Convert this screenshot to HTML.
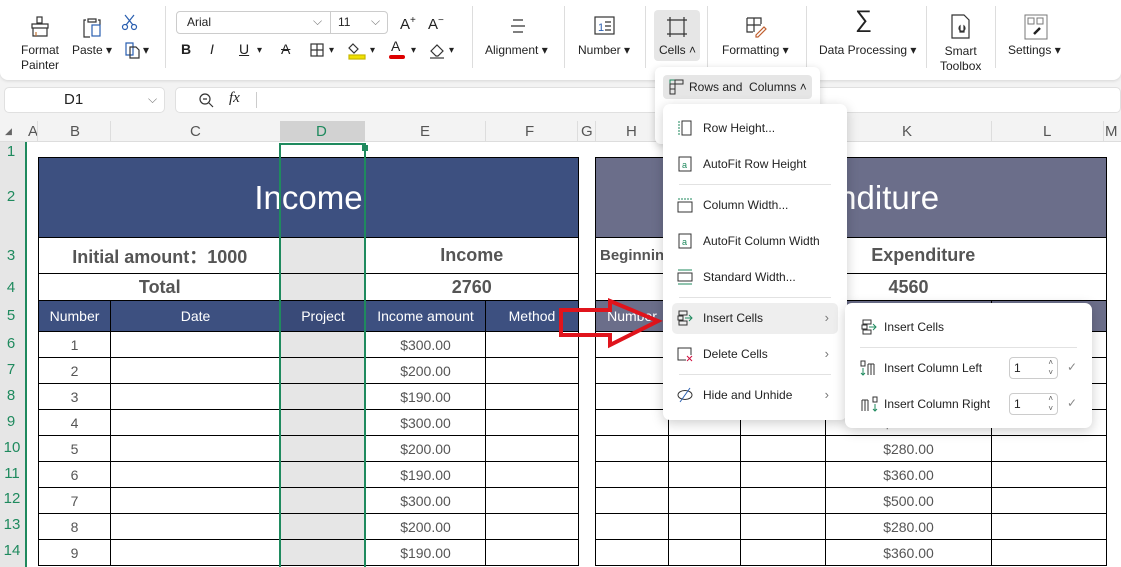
<!DOCTYPE html>
<html style="width:1121px;height:567px;overflow:hidden"><head><meta charset="utf-8"><style>
*{box-sizing:border-box;margin:0;padding:0}
body{width:1121px;height:567px;overflow:hidden;background:#f3f3f3;font-family:"Liberation Sans",Arial,sans-serif;position:relative;color:#222}
.abs{position:absolute}
.lbl{position:absolute;font-size:12px;color:#222;text-align:center;white-space:nowrap;line-height:15px}
.sep{position:absolute;top:6px;width:1px;height:62px;background:#ddd}
table{border-collapse:collapse;table-layout:fixed;position:absolute}
td{border:1px solid #000;text-align:center;font-size:14px;color:#555;white-space:nowrap;overflow:hidden;padding:0}
.hd td{background:#3d5080;color:#fff}
.hd td.d{background:#394a78}
td.d{background:#e6e6e6}
.b{font-weight:bold;font-size:18px;color:#555}
.mi{position:absolute;left:0;width:184px;height:30px;font-size:12px;color:#222;line-height:30px;padding-left:40px}
.mi svg{position:absolute;left:14px;top:7px}
.ms{position:absolute;left:16px;width:152px;height:1px;background:#e2e2e2}
.chev{position:absolute;right:18px;top:0;color:#777;font-size:13px}
#clip{position:absolute;left:0;top:0;width:1121px;height:567px;overflow:hidden}
</style></head><body><div id="clip">

<!-- ribbon -->
<div class="abs" style="left:0;top:0;width:1121px;height:80px;background:#fff;border-radius:0 0 8px 8px;box-shadow:0 1px 3px rgba(0,0,0,.12)"></div>
<svg class="abs" style="left:28px;top:15px" width="24" height="24" viewBox="0 0 24 24" fill="none" stroke="#333" stroke-width="1.2"><rect x="9" y="2" width="5" height="6"/><path d="M4 9h16v4H4zM5 13v8h14v-8"/><path d="M8 17v4" stroke="#c07030"/></svg>
<div class="lbl" style="left:14px;top:43px;width:52px">Format<br>Painter</div>
<svg class="abs" style="left:80px;top:15px" width="24" height="24" viewBox="0 0 24 24" fill="none" stroke="#333" stroke-width="1.2"><path d="M8 4h8v3H8zM6 5H4v17h6M18 5h2v5"/><rect x="12" y="10" width="8" height="11" stroke="#2a5fb0"/></svg>
<div class="lbl" style="left:72px;top:43px">Paste ▾</div>
<svg class="abs" style="left:120px;top:12px" width="20" height="20" viewBox="0 0 20 20" fill="none" stroke="#2a5fb0" stroke-width="1.2"><circle cx="5" cy="15" r="2.5"/><circle cx="14" cy="15" r="2.5"/><path d="M6 13L14 3M13 13L5 3"/></svg>
<svg class="abs" style="left:123px;top:40px" width="20" height="20" viewBox="0 0 20 20" fill="none" stroke="#333" stroke-width="1.2"><path d="M3 3h7v12H3z" stroke="#2a5fb0"/><path d="M7 7h6l3 3v8H7z"/></svg>
<div class="lbl" style="left:143px;top:43px">▾</div>
<div class="sep" style="left:165px"></div>

<div class="abs" style="left:176px;top:11px;width:212px;height:23px;border:1px solid #ccc;border-radius:4px"></div>
<div class="abs" style="left:330px;top:12px;width:1px;height:21px;background:#ccc"></div>
<div class="lbl" style="left:187px;top:15px">Arial</div>
<div class="lbl" style="left:313px;top:14px;color:#777">⌵</div>
<div class="lbl" style="left:338px;top:15px">11</div>
<div class="lbl" style="left:371px;top:14px;color:#777">⌵</div>
<div class="lbl" style="left:400px;top:13px;font-size:15px">A<sup style="font-size:10px">+</sup></div>
<div class="lbl" style="left:428px;top:13px;font-size:15px">A<sup style="font-size:10px">−</sup></div>
<div class="lbl" style="left:181px;top:42px;font-weight:bold;font-size:14px">B</div>
<div class="lbl" style="left:210px;top:42px;font-style:italic;font-size:14px">I</div>
<div class="lbl" style="left:239px;top:42px;text-decoration:underline;font-size:14px">U</div>
<div class="lbl" style="left:257px;top:43px;font-size:10px">▾</div>
<div class="lbl" style="left:281px;top:42px;text-decoration:line-through;font-size:14px">A</div>
<svg class="abs" style="left:309px;top:42px" width="16" height="16" fill="none" stroke="#333" stroke-width="1.2"><rect x="2" y="2" width="12" height="12"/><path d="M8 2v12M2 8h12"/></svg>
<div class="lbl" style="left:329px;top:43px;font-size:10px">▾</div>
<svg class="abs" style="left:348px;top:40px" width="18" height="20" fill="none" stroke="#333" stroke-width="1.2"><path d="M5 4l5 5-4 4-5-5z"/><rect x="1" y="15" width="16" height="4" fill="#f0e000" stroke="#c8b800"/></svg>
<div class="lbl" style="left:370px;top:43px;font-size:10px">▾</div>
<div class="lbl" style="left:391px;top:39px;font-size:14px">A</div>
<div class="abs" style="left:389px;top:55px;width:16px;height:4px;background:#d00;border-radius:2px"></div>
<div class="lbl" style="left:411px;top:43px;font-size:10px">▾</div>
<svg class="abs" style="left:428px;top:41px" width="18" height="18" fill="none" stroke="#333" stroke-width="1.2"><path d="M3 10l6-6 6 6-5 5H8z"/><path d="M2 17h14"/></svg>
<div class="lbl" style="left:449px;top:43px;font-size:10px">▾</div>
<div class="sep" style="left:472px"></div>

<svg class="abs" style="left:509px;top:16px" width="18" height="20" stroke="#333" stroke-width="1.2"><path d="M4 4h10M2 10h14M4 16h10"/></svg>
<div class="lbl" style="left:485px;top:43px">Alignment ▾</div>
<div class="sep" style="left:564px"></div>
<svg class="abs" style="left:594px;top:16px" width="22" height="20" fill="none" stroke="#333" stroke-width="1.2"><rect x="1" y="1" width="19" height="17"/><path d="M11 6h6M11 10h6M11 14h6"/><text x="4" y="15" font-size="11" fill="#2a5fb0" stroke="none" font-family="Liberation Sans">1</text></svg>
<div class="lbl" style="left:578px;top:43px">Number ▾</div>
<div class="sep" style="left:645px"></div>
<div class="abs" style="left:654px;top:10px;width:46px;height:51px;background:#e6e6e6;border-radius:4px"></div>
<svg class="abs" style="left:666px;top:16px" width="22" height="22" fill="none" stroke="#333" stroke-width="1.2"><path d="M4 1v20M18 1v20M1 4h20M1 18h20"/></svg>
<div class="lbl" style="left:659px;top:43px">Cells ˄</div>
<div class="sep" style="left:707px"></div>
<svg class="abs" style="left:745px;top:16px" width="24" height="22" fill="none" stroke="#333" stroke-width="1.2"><path d="M2 2h14v6M2 2v14h6M2 9h14M9 2v14"/><path d="M11 19l8-8 2 2-8 8h-2z" stroke="#c06030"/></svg>
<div class="lbl" style="left:722px;top:43px">Formatting ▾</div>
<div class="sep" style="left:806px"></div>
<div class="lbl" style="left:855px;top:12px;font-size:24px;font-weight:normal">∑</div>
<div class="lbl" style="left:819px;top:43px">Data Processing ▾</div>
<div class="sep" style="left:926px"></div>
<svg class="abs" style="left:950px;top:14px" width="22" height="26" fill="none" stroke="#333" stroke-width="1.2"><path d="M2 1h12l5 5v18H2z"/><path d="M10 12a3 3 0 1 0 4 0v6h-4z"/></svg>
<div class="lbl" style="left:940px;top:44px">Smart<br>Toolbox</div>
<div class="sep" style="left:995px"></div>
<svg class="abs" style="left:1024px;top:14px" width="24" height="26" fill="none" stroke="#777" stroke-width="1"><rect x="1" y="1" width="22" height="24"/><rect x="4" y="4" width="6" height="6"/><rect x="13" y="4" width="6" height="6"/><path d="M10 20l6-6" stroke="#222" stroke-width="2.5"/></svg>
<div class="lbl" style="left:1008px;top:43px">Settings ▾</div>

<!-- formula bar -->
<div class="abs" style="left:4px;top:87px;width:161px;height:26px;background:#fff;border-radius:5px;border:1px solid #e0e0e0"></div>
<div class="lbl" style="left:64px;top:92px;font-size:15px">D1</div>
<div class="lbl" style="left:148px;top:92px;color:#777">⌵</div>
<div class="abs" style="left:175px;top:87px;width:946px;height:26px;background:#fff;border-radius:5px;border:1px solid #e0e0e0"></div>
<svg class="abs" style="left:198px;top:92px" width="16" height="16" fill="none" stroke="#333" stroke-width="1.2"><circle cx="7" cy="7" r="5"/><path d="M5 7h4M11 11l4 4"/></svg>
<div class="lbl" style="left:229px;top:91px;font-style:italic;font-size:15px;font-family:'Liberation Serif',serif">fx</div>
<div class="abs" style="left:256px;top:92px;width:1px;height:16px;background:#ccc"></div>

<!-- sheet -->
<div class="abs" style="left:0;top:121px;width:1121px;height:446px;background:#fff"></div>
<div class="abs" style="left:0;top:121px;width:1121px;height:21px;background:#f3f3f3;border-bottom:1px solid #ddd"></div>
<div class="abs" style="left:280px;top:121px;width:85px;height:21px;background:#d2d2d2"></div>
<div class="abs" style="left:0;top:142px;width:26px;height:425px;background:#e6e6e6"></div>
<div class="abs" style="left:25px;top:142px;width:2px;height:425px;background:#1f8a5e"></div>
<div class="lbl" style="left:5px;top:124px;font-size:9px;color:#666">◢</div>
<div style="position:absolute;left:0;top:121px;font-size:15px;color:#555;line-height:21px">
<span class="abs" style="left:28px">A</span><span class="abs" style="left:70px">B</span><span class="abs" style="left:190px">C</span><span class="abs" style="left:316px;color:#1f8a5e">D</span><span class="abs" style="left:420px">E</span><span class="abs" style="left:525px">F</span><span class="abs" style="left:581px">G</span><span class="abs" style="left:626px">H</span><span class="abs" style="left:902px">K</span><span class="abs" style="left:1043px">L</span><span class="abs" style="left:1105px">M</span>
</div>
<div class="abs" style="left:37px;top:121px;width:1px;height:21px;background:#ddd"></div>
<div class="abs" style="left:110px;top:121px;width:1px;height:21px;background:#ddd"></div>
<div class="abs" style="left:485px;top:121px;width:1px;height:21px;background:#ddd"></div>
<div class="abs" style="left:577px;top:121px;width:1px;height:21px;background:#ddd"></div>
<div class="abs" style="left:595px;top:121px;width:1px;height:21px;background:#ddd"></div>
<div class="abs" style="left:991px;top:121px;width:1px;height:21px;background:#ddd"></div>
<div class="abs" style="left:1103px;top:121px;width:1px;height:21px;background:#ddd"></div>
<div style="position:absolute;left:0;width:24px;text-align:center;font-size:15px;color:#1f8a5e">
<div class="abs" style="left:0;width:22px;top:143px">1</div>
<div class="abs" style="left:0;width:22px;top:188px">2</div>
<div class="abs" style="left:0;width:22px;top:247px">3</div>
<div class="abs" style="left:0;width:22px;top:279px">4</div>
<div class="abs" style="left:0;width:22px;top:307px">5</div>
<div class="abs" style="left:0;width:22px;top:335px">6</div>
<div class="abs" style="left:0;width:22px;top:361px">7</div>
<div class="abs" style="left:0;width:22px;top:387px">8</div>
<div class="abs" style="left:0;width:22px;top:413px">9</div>
<div class="abs" style="left:0;width:24px;top:439px">10</div>
<div class="abs" style="left:0;width:24px;top:465px">11</div>
<div class="abs" style="left:0;width:24px;top:490px">12</div>
<div class="abs" style="left:0;width:24px;top:516px">13</div>
<div class="abs" style="left:0;width:24px;top:542px">14</div>
</div>

<!-- income table -->
<table style="left:38px;top:157px;width:540px">
<colgroup><col style="width:72px"><col style="width:170px"><col style="width:85px"><col style="width:120px"><col style="width:93px"></colgroup>
<tr style="height:80px"><td colspan="5" style="background:#3d5080;color:#fff;font-size:33px">Income</td></tr>
<tr style="height:36px"><td colspan="2" class="b" style="border-right:none">Initial amount：1000</td><td class="d" style="border-left:none;border-right:none"></td><td colspan="2" class="b" style="border-left:none">Income</td></tr>
<tr style="height:27px"><td colspan="2" class="b" style="border-right:none">Total</td><td class="d" style="border-left:none;border-right:none"></td><td colspan="2" class="b" style="border-left:none">2760</td></tr>
<tr class="hd" style="height:31px"><td>Number</td><td>Date</td><td class="d">Project</td><td>Income amount</td><td>Method</td></tr>
<tr style="height:26px"><td>1</td><td></td><td class="d"></td><td>$300.00</td><td></td></tr>
<tr style="height:26px"><td>2</td><td></td><td class="d"></td><td>$200.00</td><td></td></tr>
<tr style="height:26px"><td>3</td><td></td><td class="d"></td><td>$190.00</td><td></td></tr>
<tr style="height:26px"><td>4</td><td></td><td class="d"></td><td>$300.00</td><td></td></tr>
<tr style="height:26px"><td>5</td><td></td><td class="d"></td><td>$200.00</td><td></td></tr>
<tr style="height:26px"><td>6</td><td></td><td class="d"></td><td>$190.00</td><td></td></tr>
<tr style="height:26px"><td>7</td><td></td><td class="d"></td><td>$300.00</td><td></td></tr>
<tr style="height:26px"><td>8</td><td></td><td class="d"></td><td>$200.00</td><td></td></tr>
<tr style="height:26px"><td>9</td><td></td><td class="d"></td><td>$190.00</td><td></td></tr>
</table>

<!-- expenditure table -->
<table style="left:595px;top:157px;width:511px">
<colgroup><col style="width:73px"><col style="width:72px"><col style="width:85px"><col style="width:166px"><col style="width:115px"></colgroup>
<tr style="height:80px"><td colspan="5" style="background:#6b6e8a;color:#fff;font-size:33px">Expenditure</td></tr>
<tr style="height:36px"><td colspan="2" style="border-right:none;text-align:left;padding-left:4px;font-weight:bold;font-size:15px">Beginning amount</td><td colspan="3" class="b" style="border-left:none">Expenditure</td></tr>
<tr style="height:27px"><td colspan="3" class="b" style="border-right:none;font-size:17px">Total</td><td class="b" style="border-left:none;border-right:none">4560</td><td style="border-left:none"></td></tr>
<tr style="height:31px"><td style="background:#6b6e8a;color:#fff">Number</td><td style="background:#6b6e8a"></td><td style="background:#6b6e8a"></td><td style="background:#6b6e8a"></td><td style="background:#6b6e8a"></td></tr>
<tr style="height:26px"><td></td><td></td><td></td><td>$300.00</td><td></td></tr>
<tr style="height:26px"><td></td><td></td><td></td><td>$200.00</td><td></td></tr>
<tr style="height:26px"><td></td><td></td><td></td><td>$190.00</td><td></td></tr>
<tr style="height:26px"><td></td><td></td><td></td><td>$300.00</td><td></td></tr>
<tr style="height:26px"><td></td><td></td><td></td><td>$280.00</td><td></td></tr>
<tr style="height:26px"><td></td><td></td><td></td><td>$360.00</td><td></td></tr>
<tr style="height:26px"><td></td><td></td><td></td><td>$500.00</td><td></td></tr>
<tr style="height:26px"><td></td><td></td><td></td><td>$280.00</td><td></td></tr>
<tr style="height:26px"><td></td><td></td><td></td><td>$360.00</td><td></td></tr>
</table>

<!-- selection -->
<div class="abs" style="left:279px;top:143px;width:87px;height:430px;border:2px solid #1f8a5e"></div>
<div class="abs" style="left:362px;top:145px;width:6px;height:6px;background:#1f8a5e"></div>

<!-- arrow -->
<svg class="abs" style="left:558px;top:298px" width="106" height="52" fill="none" stroke="#e0141c" stroke-width="4"><path d="M3 12H52V3L100 23L52 47V37H3Z"/></svg>

<!-- menu 1 -->
<div class="abs" style="left:655px;top:67px;width:165px;height:77px;background:#fff;border-radius:6px;box-shadow:0 2px 8px rgba(0,0,0,.18)"></div>
<div class="abs" style="left:663px;top:75px;width:149px;height:24px;background:#e6e6e6;border-radius:4px"></div>
<svg class="abs" style="left:669px;top:79px" width="16" height="16" fill="none" stroke="#333" stroke-width="1"><rect x="1" y="1" width="5" height="4" stroke="#1f8a5e"/><rect x="6" y="1" width="8" height="4"/><rect x="1" y="5" width="5" height="5"/><rect x="1" y="10" width="5" height="5"/></svg>
<div class="lbl" style="left:689px;top:80px">Rows and&nbsp; Columns ˄</div>

<!-- menu 2 -->
<div class="abs" style="left:663px;top:104px;width:184px;height:316px;background:#fff;border-radius:7px;box-shadow:0 3px 12px rgba(0,0,0,.2)">
<div class="mi" style="top:9px"><svg width="16" height="16" fill="none" stroke="#333"><path d="M2 1v14" stroke="#1f8a5e" stroke-dasharray="2 1"/><rect x="5" y="1" width="9" height="14"/></svg>Row Height...</div>
<div class="mi" style="top:45px"><svg width="16" height="16" fill="none" stroke="#333"><rect x="2" y="1" width="12" height="14"/><text x="5" y="12" font-size="9" fill="#1f8a5e" stroke="none">a</text></svg>AutoFit Row Height</div>
<div class="ms" style="top:80px"></div>
<div class="mi" style="top:86px"><svg width="16" height="16" fill="none" stroke="#333"><path d="M1 2h14" stroke="#1f8a5e" stroke-dasharray="2 1"/><rect x="1" y="5" width="14" height="10"/></svg>Column Width...</div>
<div class="mi" style="top:122px"><svg width="16" height="16" fill="none" stroke="#333"><rect x="2" y="1" width="12" height="14"/><text x="5" y="12" font-size="9" fill="#1f8a5e" stroke="none">a</text></svg>AutoFit Column Width</div>
<div class="mi" style="top:158px"><svg width="16" height="16" fill="none" stroke="#333"><path d="M1 1h14M1 15h14" stroke="#1f8a5e"/><rect x="1" y="4" width="14" height="8"/></svg>Standard Width...</div>
<div class="ms" style="top:193px"></div>
<div class="abs" style="left:9px;top:199px;width:166px;height:31px;background:#eeeeee;border-radius:5px"></div>
<div class="mi" style="top:199px"><svg width="16" height="16" fill="none" stroke="#333"><rect x="2" y="1" width="8" height="4"/><rect x="1" y="6" width="5" height="4"/><rect x="2" y="11" width="8" height="4"/><path d="M8 8h7M12 5l3 3-3 3" stroke="#1f8a5e"/></svg>Insert Cells<span class="chev">›</span></div>
<div class="mi" style="top:235px"><svg width="16" height="16" fill="none" stroke="#333"><path d="M14 9V2H1v12h8"/><path d="M10 10l5 5M15 10l-5 5" stroke="#d01040"/></svg>Delete Cells<span class="chev">›</span></div>
<div class="ms" style="top:270px"></div>
<div class="mi" style="top:276px"><svg width="16" height="16" fill="none" stroke="#333"><ellipse cx="8" cy="8" rx="7" ry="4.5"/><path d="M13 1L3 15" stroke="#2a5fb0"/></svg>Hide and Unhide<span class="chev">›</span></div>
</div>

<!-- submenu -->
<div class="abs" style="left:845px;top:303px;width:247px;height:125px;background:#fff;border-radius:7px;box-shadow:0 3px 12px rgba(0,0,0,.2)">
<svg class="abs" style="left:16px;top:16px" width="16" height="16" fill="none" stroke="#333"><rect x="2" y="1" width="8" height="4"/><rect x="1" y="6" width="5" height="4"/><rect x="2" y="11" width="8" height="4"/><path d="M8 8h7M12 5l3 3-3 3" stroke="#1f8a5e"/></svg>
<div class="lbl" style="left:39px;top:17px">Insert Cells</div>
<div class="abs" style="left:15px;top:44px;width:217px;height:1px;background:#e2e2e2"></div>
<svg class="abs" style="left:15px;top:57px" width="18" height="16" fill="none" stroke="#333"><rect x="1" y="1" width="4" height="5"/><path d="M3 8v7M1 13l2 2 2-2" stroke="#1f8a5e"/><path d="M8 4v11M11 4v11M14 4v11M8 4h6"/></svg>
<div class="lbl" style="left:39px;top:58px">Insert Column Left</div>
<svg class="abs" style="left:15px;top:93px" width="18" height="16" fill="none" stroke="#333"><rect x="13" y="1" width="4" height="5"/><path d="M15 8v7M13 13l2 2 2-2" stroke="#1f8a5e"/><path d="M2 4v11M5 4v11M8 4v11M2 4h6"/></svg>
<div class="lbl" style="left:39px;top:94px">Insert Column Right</div>
<div class="abs" style="left:164px;top:54px;width:49px;height:22px;border:1px solid #ccc;border-radius:4px;font-size:12px;padding:3px 0 0 4px">1<span class="abs" style="right:4px;top:0;font-size:8px;line-height:10px;color:#555">˄<br>˅</span></div>
<div class="abs" style="left:164px;top:90px;width:49px;height:22px;border:1px solid #ccc;border-radius:4px;font-size:12px;padding:3px 0 0 4px">1<span class="abs" style="right:4px;top:0;font-size:8px;line-height:10px;color:#555">˄<br>˅</span></div>
<div class="lbl" style="left:222px;top:57px;color:#888">✓</div>
<div class="lbl" style="left:222px;top:93px;color:#888">✓</div>
</div>
</div></body></html>
